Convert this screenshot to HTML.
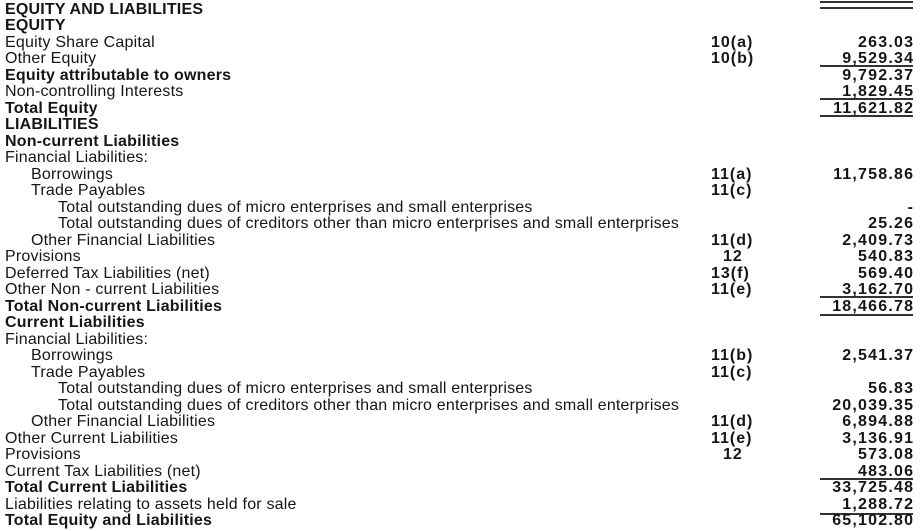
<!DOCTYPE html>
<html><head><meta charset="utf-8"><style>
body{margin:0;width:920px;height:531px;background:#fff;position:relative;overflow:hidden;font-family:"Liberation Sans",sans-serif;color:#161616}
.r{position:absolute;left:0;width:920px;height:16px;font-size:16px;line-height:16px;white-space:nowrap;margin-top:1.5px}
.l{position:absolute;left:5px;letter-spacing:0.2px}
.i1{left:31px}.i2{left:58px}
.b{font-weight:bold}
.n{position:absolute;left:711px;font-weight:bold;letter-spacing:1px}
.v{position:absolute;right:7px;font-weight:bold;letter-spacing:1.2px;margin-right:-1.2px}
.ln{position:absolute;left:820px;width:93px;height:2px;background:#333}
</style></head><body>
<div class="ln" style="top:1px"></div><div class="ln" style="top:7px"></div>
<div class="ln" style="top:65px"></div><div class="ln" style="top:98px"></div><div class="ln" style="top:115px"></div>
<div class="ln" style="top:296px"></div><div class="ln" style="top:314px"></div>
<div class="ln" style="top:478px"></div><div class="ln" style="top:513px"></div>

<div class="r" style="top:0px"><span class="l b">EQUITY AND LIABILITIES</span></div>
<div class="r" style="top:16.5px"><span class="l b">EQUITY</span></div>
<div class="r" style="top:33px"><span class="l">Equity Share Capital</span><span class="n">10(a)</span><span class="v">263.03</span></div>
<div class="r" style="top:49.5px"><span class="l">Other Equity</span><span class="n">10(b)</span><span class="v">9,529.34</span></div>
<div class="r" style="top:66px"><span class="l b">Equity attributable to owners</span><span class="v">9,792.37</span></div>
<div class="r" style="top:82.5px"><span class="l">Non-controlling Interests</span><span class="v">1,829.45</span></div>
<div class="r" style="top:99px"><span class="l b">Total Equity</span><span class="v">11,621.82</span></div>
<div class="r" style="top:115.5px"><span class="l b">LIABILITIES</span></div>
<div class="r" style="top:132px"><span class="l b">Non-current Liabilities</span></div>
<div class="r" style="top:148.5px"><span class="l">Financial Liabilities:</span></div>
<div class="r" style="top:165px"><span class="l i1">Borrowings</span><span class="n">11(a)</span><span class="v">11,758.86</span></div>
<div class="r" style="top:181.5px"><span class="l i1">Trade Payables</span><span class="n">11(c)</span></div>
<div class="r" style="top:198px"><span class="l i2">Total outstanding dues of micro enterprises and small enterprises</span><span class="v">-</span></div>
<div class="r" style="top:214.5px"><span class="l i2">Total outstanding dues of creditors other than micro enterprises and small enterprises</span><span class="v">25.26</span></div>
<div class="r" style="top:231px"><span class="l i1">Other Financial Liabilities</span><span class="n">11(d)</span><span class="v">2,409.73</span></div>
<div class="r" style="top:247.5px"><span class="l">Provisions</span><span class="n" style="left:723px">12</span><span class="v">540.83</span></div>
<div class="r" style="top:264px"><span class="l">Deferred Tax Liabilities (net)</span><span class="n">13(f)</span><span class="v">569.40</span></div>
<div class="r" style="top:280.5px"><span class="l">Other Non - current Liabilities</span><span class="n">11(e)</span><span class="v">3,162.70</span></div>
<div class="r" style="top:297px"><span class="l b">Total Non-current Liabilities</span><span class="v">18,466.78</span></div>
<div class="r" style="top:313.5px"><span class="l b">Current Liabilities</span></div>
<div class="r" style="top:330px"><span class="l">Financial Liabilities:</span></div>
<div class="r" style="top:346.5px"><span class="l i1">Borrowings</span><span class="n">11(b)</span><span class="v">2,541.37</span></div>
<div class="r" style="top:363px"><span class="l i1">Trade Payables</span><span class="n">11(c)</span></div>
<div class="r" style="top:379.5px"><span class="l i2">Total outstanding dues of micro enterprises and small enterprises</span><span class="v">56.83</span></div>
<div class="r" style="top:396px"><span class="l i2">Total outstanding dues of creditors other than micro enterprises and small enterprises</span><span class="v">20,039.35</span></div>
<div class="r" style="top:412.5px"><span class="l i1">Other Financial Liabilities</span><span class="n">11(d)</span><span class="v">6,894.88</span></div>
<div class="r" style="top:429px"><span class="l">Other Current Liabilities</span><span class="n">11(e)</span><span class="v">3,136.91</span></div>
<div class="r" style="top:445.5px"><span class="l">Provisions</span><span class="n" style="left:723px">12</span><span class="v">573.08</span></div>
<div class="r" style="top:462px"><span class="l">Current Tax Liabilities (net)</span><span class="v">483.06</span></div>
<div class="r" style="top:478.5px"><span class="l b">Total Current Liabilities</span><span class="v">33,725.48</span></div>
<div class="r" style="top:495px"><span class="l">Liabilities relating to assets held for sale</span><span class="v">1,288.72</span></div>
<div class="r" style="top:511.5px"><span class="l b">Total Equity and Liabilities</span><span class="v">65,102.80</span></div>
</body></html>
